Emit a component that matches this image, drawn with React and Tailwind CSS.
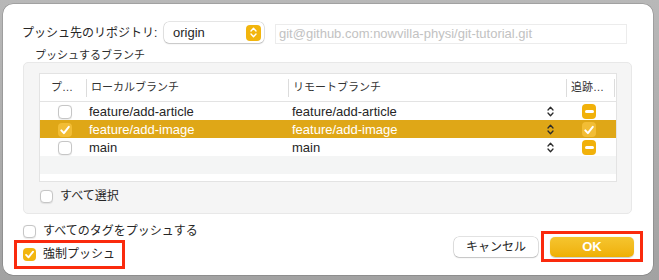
import React from 'react';

const Check = ({ size = 14 }) => (
  <svg width={size} height={size} viewBox="0 0 14 14" fill="none">
    <path d="M3.3 7.4 L5.9 10.1 L10.8 3.9" stroke="white" strokeWidth="2" strokeLinecap="round" strokeLinejoin="round" />
  </svg>
);

const Box = ({ checked, small, onGold }) => {
  const dim = small ? 'w-[13px] h-[13px]' : 'w-[14px] h-[14px]';
  if (checked) {
    return (
      <div className={`${dim} rounded-[4px] flex items-center justify-center ${onGold ? 'bg-[#f2bd35]' : 'bg-[#f2b60f]'}`}>
        <Check size={small ? 13 : 14} />
      </div>
    );
  }
  return <div className={`${dim} rounded-[4px] bg-white border border-[#c6c6c6] shadow-[0_0.5px_1px_rgba(0,0,0,0.08)]`} />;
};

const Minus = () => (
  <div className="w-[14px] h-[15px] rounded-[4px] bg-[#f1b10a] flex items-center justify-center">
    <div className="w-[9px] h-[3px] rounded-full bg-white" />
  </div>
);

const Stepper = () => (
  <svg width="7" height="11" viewBox="0 0 7 11" fill="none">
    <path d="M1 4 L3.5 1.3 L6 4" stroke="#2b2b2b" strokeWidth="1.3" strokeLinecap="round" strokeLinejoin="round" />
    <path d="M1 7 L3.5 9.7 L6 7" stroke="#2b2b2b" strokeWidth="1.3" strokeLinecap="round" strokeLinejoin="round" />
  </svg>
);

const rows = [
  { local: 'feature/add-article', remote: 'feature/add-article', push: false, track: 'minus' },
  { local: 'feature/add-image', remote: 'feature/add-image', push: true, track: 'check', selected: true },
  { local: 'main', remote: 'main', push: false, track: 'minus' },
];

const App = () => {
  return (
    <div className="w-[659px] h-[280px] bg-gradient-to-b from-[#b8b8b8] to-[#a2a2a2] pt-[4px] pl-[3px] font-['Liberation_Sans','Noto_Sans_CJK_JP',sans-serif] text-[#262626]">
      <div className="w-[650px] h-[271px] bg-white rounded-[10px] shadow-[0_0_0_0.5px_rgba(0,0,0,0.25)] flex flex-col pl-[20px] pt-[17px]">
        {/* repository row */}
        <div className="flex items-center h-[23px]">
          <span className="text-[12px] -ml-[1px] w-[142px]">プッシュ先のリポジトリ:</span>
          <div className="w-[100px] h-[21px] rounded-[5px] bg-white shadow-[0_0_0_0.5px_rgba(0,0,0,0.2),0_1px_1.5px_rgba(0,0,0,0.15)] flex items-center pl-[9px] pr-[3px]">
            <span className="text-[13px] flex-1">origin</span>
            <div className="w-[15px] h-[16px] rounded-[4px] bg-[#f2b50d] flex items-center justify-center">
              <svg width="7" height="11" viewBox="0 0 7 11" fill="none">
                <path d="M1 4 L3.5 1.3 L6 4" stroke="white" strokeWidth="1.4" strokeLinecap="round" strokeLinejoin="round" />
                <path d="M1 7 L3.5 9.7 L6 7" stroke="white" strokeWidth="1.4" strokeLinecap="round" strokeLinejoin="round" />
              </svg>
            </div>
          </div>
          <div className="ml-[11px] mt-[3px] w-[352px] h-[20px] border border-[#ececec] flex items-center pl-[3px]">
            <span className="text-[13px] text-[#c2c2c2]">git@github.com:nowvilla-physi/git-tutorial.git</span>
          </div>
        </div>

        {/* branch group */}
        <div className="text-[11px] leading-[14px] mt-[4px] ml-[12px] text-[#2e2e2e]">プッシュするブランチ</div>
        <div className="w-[609px] h-[152px] rounded-[5px] bg-[#f5f5f5] border border-[#e8e8e8] pl-[15px] pt-[10px]">
          <div className="w-[578px] h-[109px] bg-white border border-[#e3e3e3] flex flex-col">
            <div className="grid grid-cols-[46px_202px_278px_49px] h-[28px] border-b border-[#e3e3e3] items-center text-[11px] text-[#333]">
              <div className="pl-[11px]">プ…</div>
              <div className="border-l border-[#dcdcdc] h-[18px] flex items-center pl-[4px]">ローカルブランチ</div>
              <div className="border-l border-[#dcdcdc] h-[18px] flex items-center pl-[4px]">リモートブランチ</div>
              <div className="border-x border-[#dcdcdc] h-[18px] flex items-center pl-[4px]">追跡…</div>
            </div>
            {rows.map((r) => (
              <div
                key={r.local}
                className={`grid grid-cols-[46px_202px_278px_49px] h-[18px] items-center text-[13px] ${r.selected ? 'bg-[#dfa717] text-white' : 'bg-white'}`}
              >
                <div className="pl-[18px]"><Box checked={r.push} onGold={r.selected} /></div>
                <div className="pl-[3px]">{r.local}</div>
                <div className="pl-[4px] pr-[12px] flex items-center justify-between">
                  <span>{r.remote}</span>
                  <Stepper />
                </div>
                <div className="pl-[16px]">
                  {r.track === 'minus' ? (
                    <Minus />
                  ) : (
                    <div className="w-[14px] h-[15px] rounded-[4px] bg-[#f2bd35] flex items-center justify-center"><Check /></div>
                  )}
                </div>
              </div>
            ))}
            <div className="h-[18px] bg-[#f4f5f5]" />
          </div>
          <div className="flex items-center mt-[8px] gap-[7px] pl-[1px] h-[13px]">
            <Box small />
            <span className="text-[12px] leading-[13px]">すべて選択</span>
          </div>
        </div>

        {/* bottom */}
        <div className="flex items-end">
          <div className="flex flex-col">
            <div className="flex items-center mt-[11px] gap-[7px] h-[13px]">
              <Box small />
              <span className="text-[12px] leading-[13px]">すべてのタグをプッシュする</span>
            </div>
            <div className="mt-[2px] -ml-[9px] border-[3px] border-[#fa2a0d] pl-[6px] pr-[6px] py-[5px] flex items-center gap-[7px] w-[111px] h-[29px]">
              <Box small checked />
              <span className="text-[12px] leading-[13px]">強制プッシュ</span>
            </div>
          </div>
          <div className="ml-auto mr-[10px] mb-[7px] flex items-center">
            <button className="w-[84px] h-[20px] rounded-[5px] bg-white shadow-[0_0_0_0.5px_rgba(0,0,0,0.22),0_1px_1.5px_rgba(0,0,0,0.15)] text-[12px] text-[#262626] flex items-center justify-center">
              キャンセル
            </button>
            <div className="ml-[3px] border-[3px] border-[#fa2a0d] w-[102px] h-[31px] flex items-center justify-center">
              <button className="w-[84px] h-[20px] rounded-[5px] bg-gradient-to-b from-[#f5c52e] to-[#efb000] shadow-[0_0.5px_1px_rgba(0,0,0,0.2)] text-[13px] font-bold text-white flex items-center justify-center">
                OK
              </button>
            </div>
          </div>
        </div>
      </div>
    </div>
  );
};

export default App;
